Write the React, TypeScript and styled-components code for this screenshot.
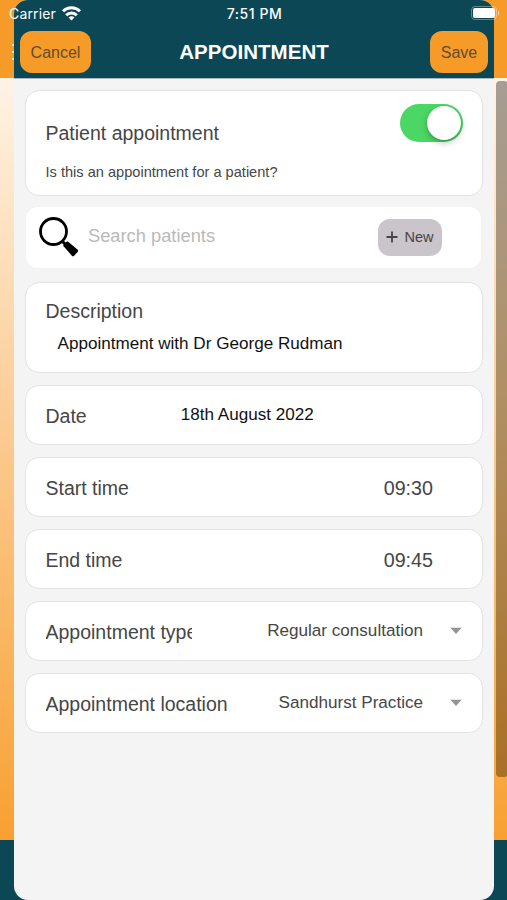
import React from "react";
import styled, { createGlobalStyle } from "styled-components";

const GlobalStyle = createGlobalStyle`
  * { box-sizing: border-box; }
  html, body { margin: 0; padding: 0; overflow: hidden; }
  body { font-family: "Liberation Sans", Arial, sans-serif; color: #464646; }
  button { font-family: inherit; border: 0; padding: 0; }
`;

const Screen = styled.div`
  position: relative;
  width: 507px;
  height: 900px;
  overflow: hidden;
  padding: 0 13px 0 14px;
  background: linear-gradient(
    #f79b28 0 78px,
    #fff3e5 78px,
    #fbc88a 460px,
    #f8a032 840px,
    #0c4756 840px
  );
`;

const Sheet = styled.main`
  position: relative;
  display: flex;
  flex-direction: column;
  height: 900px;
  border-radius: 14px;
  overflow: hidden;
  background: #f4f4f4;
`;

const Header = styled.header`
  flex: none;
  height: 79px;
  padding: 31px 6px 0;
  display: flex;
  justify-content: space-between;
  align-items: flex-start;
  background: #0c4756;
  border-bottom: 1px solid #a9b9be;
`;

const Title = styled.h1`
  margin: 0 13px 0 0;
  height: 42px;
  line-height: 42px;
  font-size: 20.5px;
  letter-spacing: 0.05px;
  color: #fff;
`;

const HeaderButton = styled.button<{ $width: number }>`
  width: ${(p) => p.$width}px;
  height: 42px;
  border-radius: 12px;
  background: #f79b28;
  color: #614b2c;
  font-size: 16px;
  line-height: 44px;
`;

const StatusBar = styled.div`
  position: absolute;
  inset: 0 0 auto 0;
  height: 26px;
  padding: 0 7px 0 9px;
  display: grid;
  grid-template-columns: 1fr auto 1fr;
  align-items: center;
  font-family: Inter, sans-serif;
  font-size: 14px;
  color: #fff;
`;

const Carrier = styled.div`
  display: flex;
  align-items: center;
  gap: 6px;
  letter-spacing: 0.15px;
`;

const Clock = styled.div`
  font-weight: 500;
  letter-spacing: 0.55px;
`;

const BatteryIcon = styled.svg`
  justify-self: end;
`;

const MenuDots = styled.svg`
  position: absolute;
  left: 12px;
  top: 43px;
`;

const ScrollThumb = styled.div`
  position: absolute;
  left: 496px;
  top: 81px;
  width: 12px;
  height: 696px;
  border-radius: 4px;
  background: linear-gradient(#a69d94, #b09064 45%, #aa7026);
`;

const Form = styled.div`
  display: flex;
  flex-direction: column;
  gap: 12px;
  padding: 11px 11px 0;
`;

const Card = styled.section`
  width: 458px;
  border: 1px solid #e2e2e2;
  border-radius: 14px;
  background: #fff;
`;

const PatientCard = styled(Card)`
  height: 106px;
  padding: 0 19px 0 19.5px;
`;

const ToggleRow = styled.div`
  display: flex;
  justify-content: space-between;
  height: 71px;
`;

const Label = styled.span<{ $width?: number }>`
  display: block;
  width: ${(p) => (p.$width ? p.$width + "px" : "auto")};
  overflow: hidden;
  white-space: nowrap;
  font-size: 19.5px;
  line-height: 26px;
`;

const PatientLabel = styled(Label)`
  margin-top: 29px;
`;

const Hint = styled.p`
  margin: 0;
  font-size: 14.6px;
  line-height: 20px;
`;

const Switch = styled.button`
  width: 63px;
  height: 38px;
  margin-top: 13px;
  padding: 2px;
  display: flex;
  justify-content: flex-end;
  border-radius: 19px;
  background: #4bd763;
`;

const Knob = styled.span`
  width: 34px;
  height: 34px;
  border-radius: 50%;
  background: #fff;
  box-shadow: 0 3px 7px rgba(0, 0, 0, 0.22), 0 1px 2px rgba(0, 0, 0, 0.16);
`;

const SearchCard = styled.section`
  height: 61px;
  width: 455px;
  margin: -1px 0 2px 1px;
  padding: 0 39px 1px 12px;
  display: flex;
  align-items: center;
  border-radius: 12px;
  background: #fff;
`;

const Placeholder = styled.span`
  flex: 1;
  margin-left: 9px;
  padding-bottom: 2px;
  font-size: 18.3px;
  color: #b9b9b9;
`;

const NewButton = styled.button`
  width: 64px;
  height: 37px;
  display: flex;
  align-items: center;
  justify-content: center;
  gap: 6px;
  border-radius: 12px;
  background: #cac5ca;
  color: #464346;
  font-size: 14.5px;
  line-height: 38px;
`;

const DescriptionCard = styled(Card)`
  height: 91px;
  padding: 15px 19.5px 0;
`;

const DescriptionText = styled.p`
  margin: 8px 0 0 12px;
  font-size: 17.1px;
  line-height: 24px;
  color: #111;
`;

const FieldCard = styled(Card)`
  height: 60px;
  padding: 2px 20px 0 19.5px;
  display: flex;
  align-items: center;
`;

const DateValue = styled.span`
  margin: -3px 0 0 94px;
  font-size: 17.1px;
  color: #111;
`;

const TimeValue = styled.span`
  margin-left: auto;
  margin-right: 29px;
  font-size: 19.7px;
`;

const SelectValue = styled.span`
  display: flex;
  align-items: center;
  gap: 27px;
  margin: -3px 0 0 auto;
  font-size: 17.1px;
`;

const Caret = () => (
  <svg width="12" height="8" viewBox="0 0 12 8">
    <path d="M.3.8h11.4L6 7z" fill="#959595" />
  </svg>
);

export default function App() {
  return (
    <>
      <GlobalStyle />
      <Screen>
        <ScrollThumb />
        <Sheet>
          <Header>
            <HeaderButton $width={71}>Cancel</HeaderButton>
            <Title>APPOINTMENT</Title>
            <HeaderButton $width={58}>Save</HeaderButton>
          </Header>
          <Form>
            <PatientCard>
              <ToggleRow>
                <PatientLabel>Patient appointment</PatientLabel>
                <Switch role="switch" aria-checked="true">
                  <Knob />
                </Switch>
              </ToggleRow>
              <Hint>Is this an appointment for a patient?</Hint>
            </PatientCard>
            <SearchCard>
              <svg width="41" height="42" viewBox="0 0 41 42">
                <circle cx="15.5" cy="15.5" r="13" fill="none" stroke="#000" strokeWidth="2.8" />
                <path d="M24 25l4 4" stroke="#000" strokeWidth="3" />
                <path d="M25.6 30.2c-.5-.8-.3-1.4.3-2l2.2-2.2c.7-.6 1.4-.7 2.1-.2l9.2 7.8c.9.8.9 1.5.2 2.3l-3.4 3.8c-.8.8-1.5.7-2.3 0z" />
              </svg>
              <Placeholder>Search patients</Placeholder>
              <NewButton>
                <svg width="12" height="12" viewBox="0 0 12 12">
                  <path d="M6 .5v11M.5 6h11" stroke="#464346" strokeWidth="1.8" />
                </svg>
                New
              </NewButton>
            </SearchCard>
            <DescriptionCard>
              <Label>Description</Label>
              <DescriptionText>Appointment with Dr George Rudman</DescriptionText>
            </DescriptionCard>
            <FieldCard>
              <Label>Date</Label>
              <DateValue>18th August 2022</DateValue>
            </FieldCard>
            <FieldCard>
              <Label>Start time</Label>
              <TimeValue>09:30</TimeValue>
            </FieldCard>
            <FieldCard>
              <Label>End time</Label>
              <TimeValue>09:45</TimeValue>
            </FieldCard>
            <FieldCard>
              <Label $width={146}>Appointment type</Label>
              <SelectValue>
                Regular consultation <Caret />
              </SelectValue>
            </FieldCard>
            <FieldCard>
              <Label>Appointment location</Label>
              <SelectValue>
                Sandhurst Practice <Caret />
              </SelectValue>
            </FieldCard>
          </Form>
        </Sheet>
        <MenuDots width="3" height="20" viewBox="0 0 3 20" fill="#fff">
          <circle cx="1" cy="2" r="1" />
          <circle cx="1" cy="9" r="1" />
          <circle cx="1" cy="16" r="1" />
        </MenuDots>
        <StatusBar>
          <Carrier>
            Carrier
            <svg width="19" height="15" viewBox="0 0 19 15" fill="none" stroke="#fff" strokeWidth="3">
              <path d="M1 5.3a12 12 0 0 1 17 0" />
              <path d="M4.2 9.2a7.5 7.5 0 0 1 10.6 0" />
              <path d="M9.5 14.6l-3-3a3.9 3.9 0 0 1 6 0z" fill="#fff" stroke="none" />
            </svg>
          </Carrier>
          <Clock>7:51 PM</Clock>
          <BatteryIcon width="29" height="14" viewBox="0 0 29 14">
            <rect x=".5" y=".5" width="25" height="13" rx="3.5" fill="none" stroke="#fff" strokeOpacity=".35" />
            <rect x="2" y="2" width="22" height="10" rx="2" fill="#fff" />
            <path d="M27 4.7c1.8.7 1.8 3.9 0 4.6z" fill="#fff" fillOpacity=".6" />
          </BatteryIcon>
        </StatusBar>
      </Screen>
    </>
  );
}
